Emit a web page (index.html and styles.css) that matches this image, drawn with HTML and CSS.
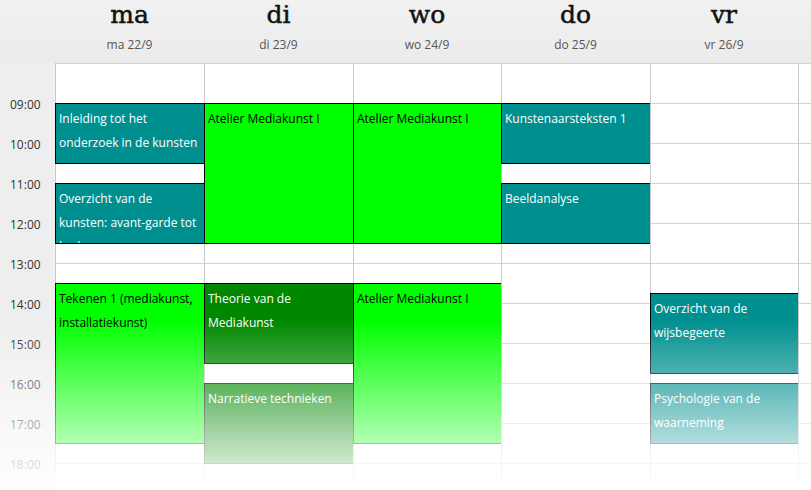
FILE: index.html
```html
<!DOCTYPE html>
<html lang="nl">
<head>
<meta charset="utf-8">
<title>Weekrooster</title>
<link rel="stylesheet" href="styles.css">
</head>
<body>
<div class="cal">
  <div class="head">
    <div class="corner"></div>
    <div class="days">
      <div class="day"><div class="dname">ma</div><div class="ddate">ma 22/9</div></div>
      <div class="day"><div class="dname">di</div><div class="ddate">di 23/9</div></div>
      <div class="day"><div class="dname">wo</div><div class="ddate">wo 24/9</div></div>
      <div class="day"><div class="dname">do</div><div class="ddate">do 25/9</div></div>
      <div class="day"><div class="dname">vr</div><div class="ddate">vr 26/9</div></div>
      <div class="day"></div>
    </div>
  </div>
  <div class="body">
    <div class="times">
      <div class="t">09:00</div>
      <div class="t">10:00</div>
      <div class="t">11:00</div>
      <div class="t">12:00</div>
      <div class="t">13:00</div>
      <div class="t">14:00</div>
      <div class="t">15:00</div>
      <div class="t">16:00</div>
      <div class="t">17:00</div>
      <div class="t">18:00</div>
    </div>
    <div class="cols">
      <div class="col">
        <div class="ev teal" style="top:40px;height:61px">Inleiding tot het onderzoek in de kunsten</div>
        <div class="ev teal" style="top:120px;height:61px">Overzicht van de kunsten: avant-garde tot heden</div>
        <div class="ev lime" style="top:220px;height:161px">Tekenen 1 (mediakunst, installatiekunst)</div>
      </div>
      <div class="col">
        <div class="ev lime" style="top:40px;height:141px">Atelier Mediakunst I</div>
        <div class="ev green" style="top:220px;height:81px">Theorie van de Mediakunst</div>
        <div class="ev green" style="top:320px;height:81px">Narratieve technieken</div>
      </div>
      <div class="col">
        <div class="ev lime" style="top:40px;height:141px">Atelier Mediakunst I</div>
        <div class="ev lime" style="top:220px;height:161px">Atelier Mediakunst I</div>
      </div>
      <div class="col">
        <div class="ev teal" style="top:40px;height:61px">Kunstenaarsteksten 1</div>
        <div class="ev teal" style="top:120px;height:61px">Beeldanalyse</div>
      </div>
      <div class="col">
        <div class="ev teal" style="top:230px;height:81px">Overzicht van de wijsbegeerte</div>
        <div class="ev teal" style="top:320px;height:61px">Psychologie van de waarneming</div>
      </div>
      <div class="col"></div>
    </div>
  </div>
  <div class="fade"></div>
</div>
</body>
</html>
```

FILE: styles.css
```css
html, body {
  margin: 0;
  padding: 0;
  background: #fff;
}

.cal {
  position: relative;
  width: 811px;
  height: 490px;
  overflow: hidden;
  font-family: "Open Sans", "Liberation Sans", sans-serif;
  font-size: 12px;
}

.head {
  display: flex;
  height: 63px;
  background: linear-gradient(#f1f1f1, #ebebeb);
}

.corner {
  width: 55px;
  flex: none;
}

.days,
.cols {
  flex: 1;
  display: grid;
  grid-template-columns: 149px 149px 148px 149px 148px 1fr;
}

.day {
  text-align: center;
}

.dname {
  font-family: "DejaVu Serif", serif;
  font-size: 25px;
  line-height: 30px;
  color: #111;
  -webkit-text-stroke: 0.5px #111;
}

.ddate {
  margin-top: 5px;
  line-height: 20px;
  color: #555;
}

.body {
  display: flex;
  height: 427px;
}

.times {
  width: 55px;
  flex: none;
  background: #eeeeee;
  padding-top: 22px;
  box-sizing: border-box;
}

.t {
  height: 40px;
  line-height: 40px;
  padding-left: 10px;
  color: #333;
}

.cols {
  background: repeating-linear-gradient(to bottom, #d4d4d4 0, #d4d4d4 1px, #fff 1px, #fff 40px);
}

.col {
  position: relative;
  border-left: 1px solid #c8c8c8;
}

.ev {
  position: absolute;
  left: -1px;
  right: -1px;
  box-sizing: border-box;
  border: 1px solid #000;
  padding: 3px 3px 2px;
  line-height: 24px;
  overflow: hidden;
}

.teal {
  background: #008f8f;
  color: #fff;
}

.lime {
  background: #00ff00;
  color: #000;
}

.green {
  background: #008800;
  color: #fff;
}

.fade {
  position: absolute;
  left: 0;
  right: 0;
  top: 320px;
  bottom: 0;
  background: linear-gradient(rgba(255, 255, 255, 0), rgba(255, 255, 255, 0.97));
  pointer-events: none;
}
```
